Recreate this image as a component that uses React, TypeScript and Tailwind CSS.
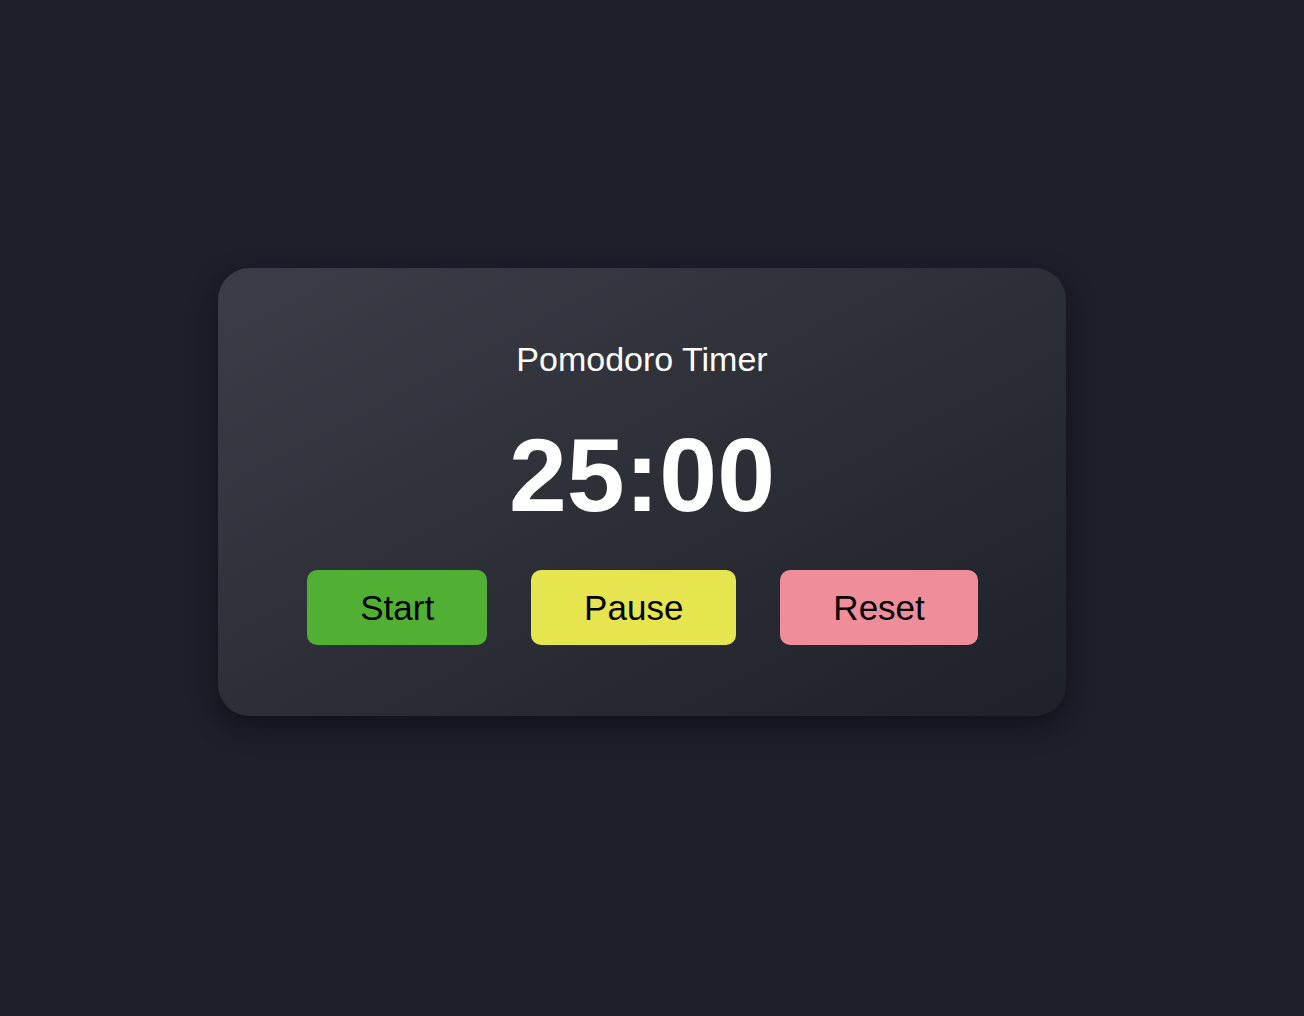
import { useEffect, useState } from 'react';

const buttons = [
  { id: 'start', label: 'Start', className: 'bg-[#51b034]' },
  { id: 'pause', label: 'Pause', className: 'bg-[#e6e550]' },
  { id: 'reset', label: 'Reset', className: 'bg-[#f08d9b]' },
];

function formatTime(seconds: number) {
  const m = Math.floor(seconds / 60).toString().padStart(2, '0');
  const s = (seconds % 60).toString().padStart(2, '0');
  return `${m}:${s}`;
}

function App() {
  const [remaining, setRemaining] = useState(25 * 60);
  const [running, setRunning] = useState(false);

  useEffect(() => {
    if (!running) return;
    const t = setInterval(() => {
      setRemaining((r) => (r > 0 ? r - 1 : 0));
    }, 1000);
    return () => clearInterval(t);
  }, [running]);

  const handle = (id: string) => {
    if (id === 'start') setRunning(true);
    if (id === 'pause') setRunning(false);
    if (id === 'reset') {
      setRunning(false);
      setRemaining(25 * 60);
    }
  };

  return (
    <div
      className="min-h-screen w-full bg-[#1f1f2c] flex items-center justify-center pr-[20px] pb-[32px]"
      style={{ fontFamily: '"Liberation Sans", Arial, sans-serif' }}
    >
      <div className="w-[848px] h-[448px] rounded-[32px] bg-gradient-to-br from-[#3b3e46] to-[#1f2128] shadow-[0_10px_30px_rgba(0,0,0,0.45)] flex flex-col items-center pt-[72px]">
        <h1 className="text-[34px] leading-[38px] text-white font-normal">Pomodoro Timer</h1>
        <div className="mt-[39px] text-[104px] leading-[117px] font-bold text-white">
          {formatTime(remaining)}
        </div>
        <div className="mt-[36px] flex gap-[44px] pl-[1px]">
          {buttons.map((b) => (
            <button
              key={b.id}
              onClick={() => handle(b.id)}
              className={`${b.className} h-[75px] px-[53px] rounded-[10px] text-[35px] leading-[40px] text-black`}
            >
              {b.label}
            </button>
          ))}
        </div>
      </div>
    </div>
  );
}

export default App;
